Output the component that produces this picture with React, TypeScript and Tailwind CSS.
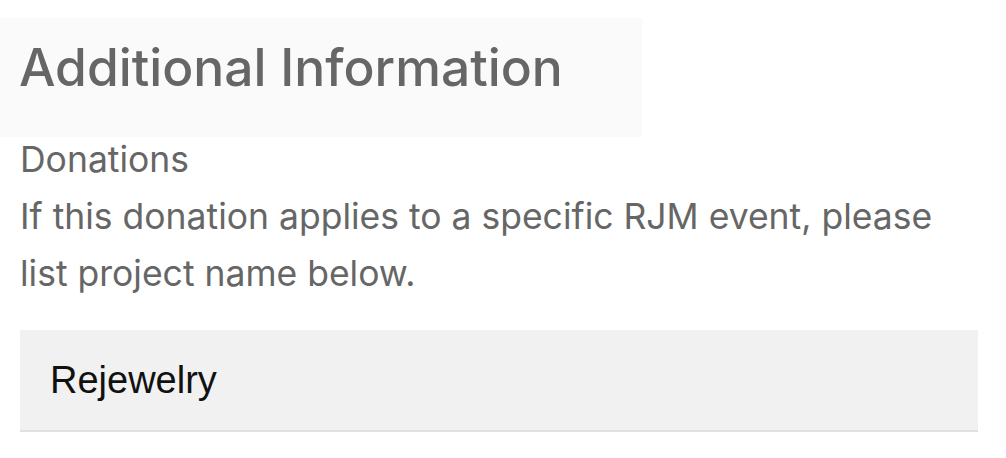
export default function App() {
  return (
    <div className="w-[1006px] h-[458px] bg-white overflow-hidden">
      <div className="mt-[18px] w-[642px] h-[119px] bg-[#fafafa] flex items-center pl-[19px]">
        <h2 className="font-['Inter',sans-serif] font-medium text-[51.5px] leading-none text-[#666666] pb-[19px]">
          Additional Information
        </h2>
      </div>
      <div className="-mt-[6px] px-[20px] font-['Inter',sans-serif] text-[35.5px] leading-[57px] text-[#666666]">
        <p>Donations</p>
        <p className="w-[960px]">
          If this donation applies to a specific RJM event, please list project name below.
        </p>
      </div>
      <div className="mx-[20px] mt-[28px] w-[958px] h-[102px] bg-[#f1f1f1] border-b-2 border-[#e0e0e0] flex items-center pl-[30px]">
        <span className="font-['Liberation_Sans',Arial,sans-serif] text-[38px] text-[#111111]">
          Rejewelry
        </span>
      </div>
    </div>
  );
}
